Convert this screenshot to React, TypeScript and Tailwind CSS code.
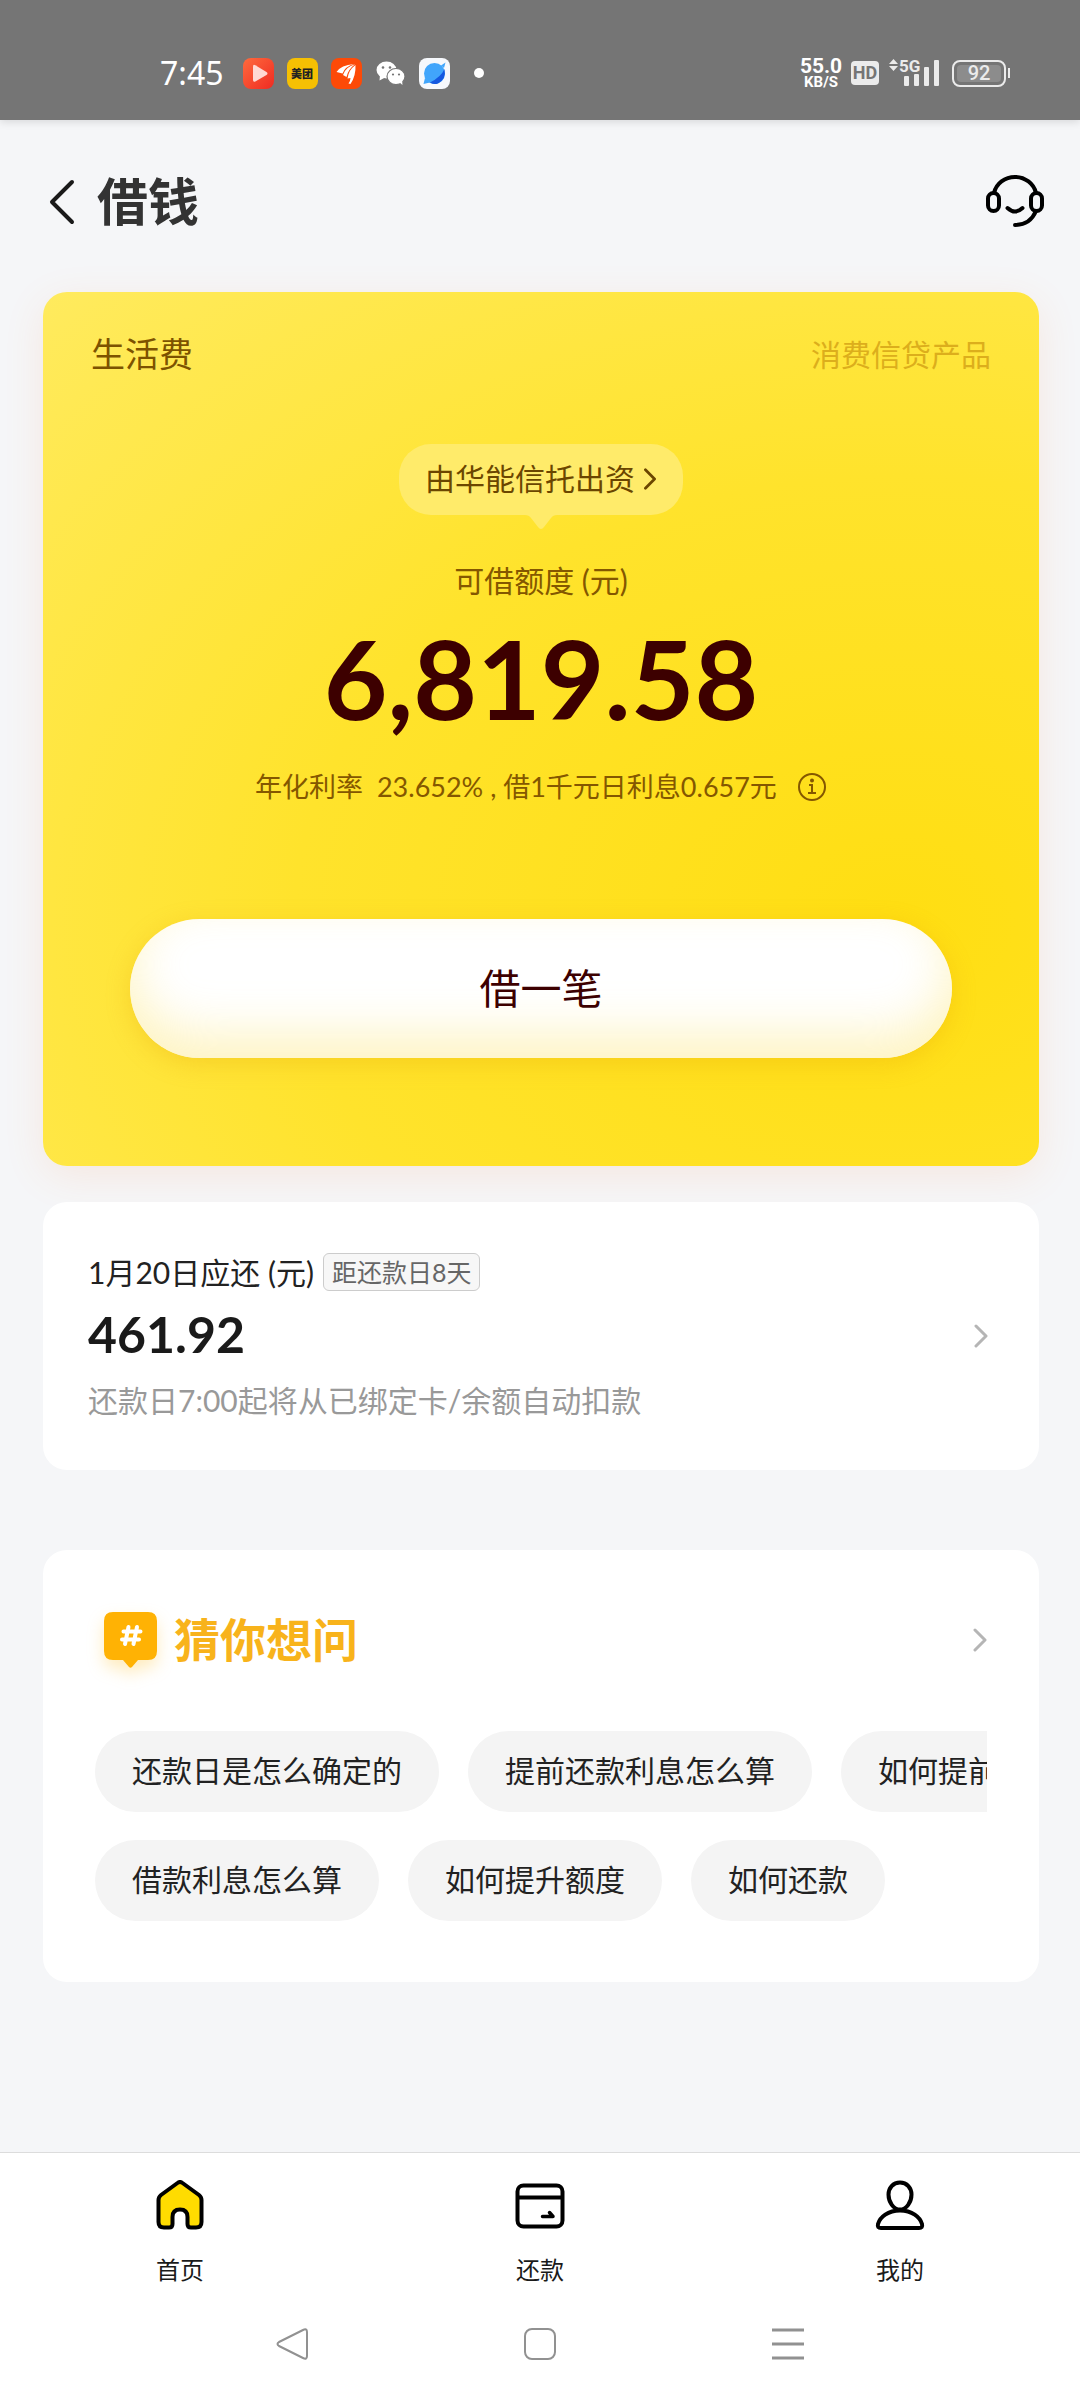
import React from "react";

const FONT = "font-['Lato','Noto_Sans_CJK_SC',sans-serif]";

function StatusBar() {
  return (
    <div className="flex h-[120px] items-center justify-between bg-[#757575] pl-40 pr-[70px] pt-[26px] text-white shadow-[0_2px_8px_rgba(0,0,0,0.12)]">
      <div className="flex h-8 items-center gap-[13px]">
        <span className="mr-[6px] font-['Noto_Sans',sans-serif] text-[32px] leading-8">7:45</span>
        <svg className="size-[31px]" viewBox="0 0 31 31" aria-hidden="true">
          <defs>
            <linearGradient id="video" x1="0" y1="0" x2="1" y2="1">
              <stop offset="0" stopColor="#ff6a3d" />
              <stop offset="1" stopColor="#ee2b22" />
            </linearGradient>
          </defs>
          <rect width="31" height="31" rx="8" fill="url(#video)" />
          <path d="M10 8.500Q10 6 12.300 7.200L23.500 14Q25.500 15.500 23.500 17L12.300 23.500Q10 24.500 10 22Z" fill="#ffd9d3" />
        </svg>
        <span className="flex size-[31px] items-center justify-center rounded-lg bg-[#f6c003] text-[11px] font-black leading-none text-[#222]">
          美团
        </span>
        <svg className="size-[31px]" viewBox="0 0 31 31" aria-hidden="true">
          <rect width="31" height="31" rx="8" fill="#fd4a07" />
          <path d="M5.500 14Q10 7 23 6Q14 8.500 11.500 15.500Z" fill="#fff" />
          <path d="M12 17Q14.500 9 24 6.300Q17 11.500 15.500 19Z" fill="#fff" />
          <path d="M16.500 20.500Q17.500 12 24.500 7Q25 18 19.500 26L17.500 25.500Q19.500 22.500 19.500 20Z" fill="#fff" />
        </svg>
        <svg className="h-[24px] w-[31px]" viewBox="0 0 31 24" aria-hidden="true">
          <ellipse cx="11.500" cy="9" rx="10" ry="8.500" fill="#fff" />
          <path d="M5 14L4.500 19.500L11 16Z" fill="#fff" />
          <ellipse cx="21" cy="15.500" rx="9" ry="8" fill="#fff" stroke="#757575" strokeWidth="1.200" />
          <path d="M24 21L27.500 24L27 19Z" fill="#fff" />
          <circle cx="8" cy="6.500" r="1.300" fill="#757575" />
          <circle cx="15" cy="6.500" r="1.300" fill="#757575" />
          <circle cx="18" cy="13.500" r="1.100" fill="#757575" />
          <circle cx="24" cy="13.500" r="1.100" fill="#757575" />
        </svg>
        <svg className="size-[31px]" viewBox="0 0 31 31" aria-hidden="true">
          <rect width="31" height="31" rx="8" fill="#f6f8fc" />
          <circle cx="15.500" cy="15.500" r="10.500" fill="#41a5fb" />
          <path d="M25.500 11Q22 19 11 24.500Q15 27 19 25.400Q27.500 21 25.500 11Z" fill="#1558e0" />
          <path d="M22 7.500L26.500 4.500L25 10Z" fill="#41a5fb" />
          <path d="M6 20L4.500 26L11 24.500Z" fill="#41a5fb" />
        </svg>
        <span className="ml-[11px] size-[10px] rounded-full bg-white" />
      </div>
      <div className="flex h-8 items-center">
        <div className="mr-[9px] flex w-[42px] flex-col items-center font-['Roboto',sans-serif] font-bold">
          <span className="text-[21px] leading-[18px]">55.0</span>
          <span className="text-[15px] leading-[14px]">KB/S</span>
        </div>
        <span className="mr-[10px] flex h-6 w-7 items-center justify-center rounded bg-[#ebebeb] font-['Roboto',sans-serif] text-[18px] font-bold leading-none text-[#757575]">
          HD
        </span>
        <div className="relative mr-3 h-7 w-[51px]">
          <svg className="size-full" viewBox="0 0 51 28" fill="#ebebeb" aria-hidden="true">
            <path d="M4.500 0L9 5H0ZM4.500 12L9 7H0Z" />
            <rect x="15" y="17" width="5" height="10" rx="1" />
            <rect x="25" y="15" width="5" height="12" rx="1" />
            <rect x="35" y="8" width="5" height="19" rx="1" />
            <rect x="45" y="1" width="5" height="26" rx="1" />
          </svg>
          <span className="absolute left-[10px] top-0 font-['Roboto',sans-serif] text-[17px] font-bold leading-[14px] text-[#ebebeb]">5G</span>
        </div>
        <div className="flex items-center gap-[2px]">
          <span className="flex h-[27px] w-[54px] items-center justify-center rounded-lg border-2 border-[#ebebeb] p-[3px]">
            <span className="flex size-full items-center justify-center rounded bg-[#8c8c8c] font-['Roboto',sans-serif] text-[20px] font-medium leading-none text-[#ebebeb]">
              92
            </span>
          </span>
          <span className="h-[10px] w-[2px] bg-[#ebebeb]" />
        </div>
      </div>
    </div>
  );
}

function Chevron({ className }: { className: string }) {
  return (
    <svg className={className} viewBox="0 0 14 24" fill="none" stroke="currentColor" strokeLinecap="round" strokeLinejoin="round" aria-hidden="true">
      <path d="M2 2L12 12L2 22" />
    </svg>
  );
}

function Header() {
  return (
    <header className="flex h-[172px] items-center justify-between pb-[8px] pl-[48px] pr-[36px]">
      <div className="flex items-center gap-[21px]">
        <button type="button" aria-label="返回">
          <svg className="h-[46px] w-7" viewBox="0 0 28 46" fill="none" stroke="#1a1a1a" strokeWidth="4" strokeLinecap="round" strokeLinejoin="round">
            <path d="M24 3L4 23L24 43" />
          </svg>
        </button>
        <h1 className="text-[51px] font-bold leading-[60px] text-[#333]">借钱</h1>
      </div>
      <button type="button" aria-label="客服" className="pb-1">
        <svg className="h-[56px] w-[58px]" viewBox="0 0 58 56" fill="none" stroke="#000" strokeWidth="4" strokeLinecap="round">
          <path d="M8 21A21.500 20.500 0 0 1 50 21" />
          <rect x="2" y="21" width="11" height="18" rx="5.500" />
          <rect x="45" y="21" width="11" height="18" rx="5.500" />
          <path d="M50 39Q44 53 29 53" />
          <path d="M21.500 36Q29 43 36.500 36" />
        </svg>
      </button>
    </header>
  );
}

function LoanCard() {
  return (
    <section className="flex flex-col items-center rounded-3xl bg-[radial-gradient(ellipse_at_86%_72%,#ffde12_0%,#ffe32c_50%,#ffec68_110%)] pb-[108px] pt-[38px] shadow-[0_10px_40px_rgba(255,130,60,0.12)]">
      <div className="flex w-full items-center justify-between px-12 leading-[48px]">
        <h2 className="text-[34px] text-[#7d5300]">生活费</h2>
        <span className="text-[30px] text-[#dcae1c]">消费信贷产品</span>
      </div>
      <button type="button" className="relative mt-[66px] flex h-[71px] items-center gap-2 rounded-[32px] bg-[#ffeb6a] px-[26px] pb-[2px] text-[30px] text-[#6b4600]">
        由华能信托出资
        <Chevron className="h-[22px] w-[14px] stroke-3" />
        <svg className="absolute left-1/2 top-full h-[15px] w-8 -translate-x-1/2" viewBox="0 0 32 15" aria-hidden="true">
          <path d="M0 0Q4 0 6 3L13 12Q16 16 19 12L26 3Q28 0 32 0Z" fill="#ffeb6a" />
        </svg>
      </button>
      <p className="mt-[43px] text-[30px] leading-[44px] text-[#845700]">可借额度 (元)</p>
      <p className="mt-5 text-[110px] font-bold leading-[110px] text-[#3d0000]">6,819.58</p>
      <p className="mt-[35px] flex items-center gap-5 text-[27px] leading-10 text-[#845700]">
        <span>年化利率&nbsp; 23.652% , 借1千元日利息0.657元</span>
        <button type="button" aria-label="利率说明">
          <svg className="size-[30px]" viewBox="0 0 30 30" fill="none" stroke="currentColor" strokeWidth="2">
            <circle cx="15" cy="15" r="13" />
            <path d="M12 13H15V21M11 21H19" />
            <circle cx="15" cy="8.500" r="1" fill="currentColor" />
          </svg>
        </button>
      </p>
      <div className="mt-[112px] w-full px-[87px]">
        <button
          type="button"
          className="h-[139px] w-full rounded-full bg-white text-[41px] text-[#3d0000] shadow-[0_6px_24px_rgba(225,150,0,0.25),inset_0_-24px_48px_rgba(253,240,175,0.75)]"
        >
          借一笔
        </button>
      </div>
    </section>
  );
}

function RepayCard() {
  return (
    <a href="#repay" className="mt-9 flex items-center justify-between rounded-3xl bg-white pb-12 pl-[45px] pr-[51px] pt-12">
      <div>
        <div className="flex items-center gap-[9px] text-[30px] leading-[44px] text-[#222]">
          <span>1月20日应还 (元)</span>
          <span className="rounded-md border border-[#ccc] bg-[#f7f7f7] px-2 text-[25px] leading-9 text-[#666]">距还款日8天</span>
        </div>
        <p className="mt-[10px] text-[50px] font-bold leading-[60px] text-[#1a1a1a]">461.92</p>
        <p className="mt-[14px] text-[30px] leading-[44px] text-[#999]">还款日7:00起将从已绑定卡/余额自动扣款</p>
      </div>
      <Chevron className="h-6 w-[14px] stroke-3 text-[#b5b5b5]" />
    </a>
  );
}

const QUESTIONS = [
  ["还款日是怎么确定的", "提前还款利息怎么算", "如何提前还款"],
  ["借款利息怎么算", "如何提升额度", "如何还款"],
];

function QuestionsCard() {
  return (
    <section className="mt-20 rounded-3xl bg-white px-[52px] pb-[61px] pt-[60px]">
      <a href="#questions" className="flex items-center justify-between">
        <span className="flex items-center gap-[17px] pl-[9px]">
          <svg className="h-[56px] w-[53px] drop-shadow-[0_8px_8px_rgba(255,180,0,0.25)]" viewBox="0 0 53 56" aria-hidden="true">
            <path d="M9 0H44Q53 0 53 9V39Q53 48 44 48H34L28 55Q26.500 56.500 25 55L19 48H9Q0 48 0 39V9Q0 0 9 0Z" fill="#ffb204" />
            <path d="M24.500 15L21 32M33 15L29.500 32M19.500 19.500H36.500M18 27.500H35" stroke="#fff" strokeWidth="4" fill="none" strokeLinecap="round" />
          </svg>
          <h2 className="text-[46px] font-bold leading-[60px] text-[#f8b31b]">猜你想问</h2>
        </span>
        <Chevron className="h-6 w-[14px] stroke-3 text-[#b5b5b5]" />
      </a>
      <div className="mt-[61px] flex flex-col gap-7 overflow-hidden">
        {QUESTIONS.map((row, i) => (
          <div key={i} className="flex gap-[29px]">
            {row.map((q) => (
              <button key={q} type="button" className="h-[81px] shrink-0 whitespace-nowrap rounded-full bg-[#f4f4f4] px-[37px] pb-[3px] text-[30px] text-[#222]">
                {q}
              </button>
            ))}
          </div>
        ))}
      </div>
    </section>
  );
}

function HomeIcon() {
  return (
    <svg className="size-[50px]" viewBox="0 0 50 50" fill="#ffdc00" stroke="#000" strokeWidth="4" strokeLinejoin="round" aria-hidden="true">
      <path d="M22.500 3Q25 1 27.500 3L44 15Q46.500 17 46.500 20V42Q46.500 47.500 41 47.500H36Q32.500 47.500 32.500 44V37Q32.500 29.500 25 29.500Q17.500 29.500 17.500 37V44Q17.500 47.500 14 47.500H9Q3.500 47.500 3.500 42V20Q3.500 17 6 15Z" />
    </svg>
  );
}

function CardIcon() {
  return (
    <svg className="size-[50px]" viewBox="0 0 50 50" fill="none" stroke="#000" strokeWidth="4" strokeLinecap="round" aria-hidden="true">
      <rect x="2.500" y="5.500" width="45" height="41" rx="6" />
      <path d="M3 17.500H47" strokeLinecap="butt" />
      <path d="M27.500 36.500H38L34.500 32.500" strokeLinejoin="round" strokeWidth="3.500" />
    </svg>
  );
}

function PersonIcon() {
  return (
    <svg className="size-[50px]" viewBox="0 0 50 50" fill="none" stroke="#000" strokeWidth="4" strokeLinejoin="round" aria-hidden="true">
      <path d="M25 2.500C32 2.500 36.500 8 36.500 14.500C36.500 22 31.500 29.500 25 29.500C18.500 29.500 13.500 22 13.500 14.500C13.500 8 18 2.500 25 2.500Z" />
      <path d="M25 30.500C37 30.500 45 37 47 44Q48 48 44 48H6Q2 48 3 44C5 37 13 30.500 25 30.500Z" />
    </svg>
  );
}

const TABS = [
  { label: "首页", Icon: HomeIcon },
  { label: "还款", Icon: CardIcon },
  { label: "我的", Icon: PersonIcon },
];

function Footer() {
  return (
    <footer className="border-t border-[#dcdcdc] bg-white pb-10 pt-[27px]">
      <nav className="grid grid-cols-3">
        {TABS.map(({ label, Icon }) => (
          <a key={label} href={`#${label}`} className="flex flex-col items-center gap-6 text-[24px] leading-8 text-[#1a1a1a]">
            <Icon />
            {label}
          </a>
        ))}
      </nav>
      <div className="mt-[42px] flex justify-center gap-[216px]">
        <button type="button" aria-label="系统返回">
          <svg className="size-8" viewBox="0 0 32 32" fill="none" stroke="#919191" strokeWidth="2" strokeLinejoin="round">
            <path d="M27 2Q31 0 31 4V28Q31 32 27 30L3 18Q0 16 3 14Z" />
          </svg>
        </button>
        <button type="button" aria-label="主屏幕">
          <svg className="size-8" viewBox="0 0 32 32" fill="none" stroke="#919191" strokeWidth="2">
            <rect x="1" y="1" width="30" height="30" rx="7" />
          </svg>
        </button>
        <button type="button" aria-label="最近任务">
          <svg className="size-8" viewBox="0 0 32 32" stroke="#919191" strokeWidth="3">
            <path d="M0 2H32M0 16H32M0 30H32" />
          </svg>
        </button>
      </div>
    </footer>
  );
}

export default function App() {
  return (
    <div className={`flex min-h-screen flex-col bg-[#f5f6f8] ${FONT}`} lang="zh-CN">
      <StatusBar />
      <Header />
      <main className="flex-1 pb-20 pl-[43px] pr-[41px]">
        <LoanCard />
        <RepayCard />
        <QuestionsCard />
      </main>
      <Footer />
    </div>
  );
}
